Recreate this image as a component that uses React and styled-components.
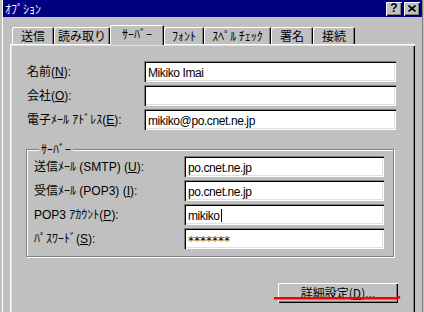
import React from "react";
import styled, { createGlobalStyle } from "styled-components";

const Global = createGlobalStyle`
  html, body { margin: 0; padding: 0; background: #c0c0c0; }
  body { font-family: "Liberation Sans", "Noto Sans CJK JP", sans-serif; font-size: 12px; color: #000; }
  * { box-sizing: border-box; }
`;

const Window = styled.div`
  position: relative;
  width: 424px;
  height: 312px;
  overflow: hidden;
  background: #c0c0c0;
  padding: 0 2px 0 3px;
  box-shadow: inset 2px 0 0 #c0c0c0, inset 3px 0 0 #fff, inset -1px 0 0 #c0c0c0, inset -2px 0 0 #808080;
`;

const TitleBar = styled.div`
  height: 17px;
  background: #000080;
  display: flex;
  align-items: center;
  padding: 0 2px 0 2px;
`;

const TitleText = styled.span`
  flex: 1;
  color: #fff;
  font-size: 12px;
  line-height: 17px;
  font-family: "Noto Sans CJK JP", sans-serif;
`;

const TitleButtons = styled.div`
  display: flex;
  gap: 2px;
`;

const TitleButton = styled.div`
  width: 16px;
  height: 14px;
  background: #c0c0c0;
  box-shadow: inset 1px 1px 0 #fff, inset -1px -1px 0 #000, inset -2px -2px 0 #808080;
  display: flex;
  align-items: center;
  justify-content: center;
  font-family: "Liberation Sans", sans-serif;
  font-weight: bold;
  font-size: 12px;
  line-height: 12px;
  color: #000;
  padding-bottom: 1px;
`;

const Body = styled.div`
  padding: 8px 7px 0 7px;
`;

const TabStrip = styled.div`
  display: flex;
  align-items: flex-end;
  height: 19px;
  padding-left: 2px;
`;

const Tab = styled.div`
  position: relative;
  z-index: ${(p) => (p.$active ? 2 : 1)};
  width: ${(p) => p.$w}px;
  height: ${(p) => (p.$active ? 20 : 17)}px;
  margin-bottom: ${(p) => (p.$active ? -1 : 0)}px;
  background: #c0c0c0;
  border-radius: 2px 2px 0 0;
  box-shadow: inset 1px 1px 0 #fff, inset -1px 0 0 #000, inset -2px 0 0 #808080;
  display: flex;
  align-items: ${(p) => (p.$active ? "flex-start" : "center")};
  justify-content: center;
  padding-top: ${(p) => (p.$active ? 2 : 1)}px;
  font-family: "Noto Sans CJK JP", sans-serif;
  font-size: 12px;
  line-height: 14px;
  white-space: nowrap;
`;

const Panel = styled.div`
  width: 405px;
  height: 300px;
  background: #c0c0c0;
  box-shadow: inset 1px 1px 0 #fff, inset 2px 2px 0 #dfdfdf, inset -1px 0 0 #000, inset -2px 0 0 #808080;
  padding: 17px 17px 0 17px;
`;

const FormGrid = styled.div`
  display: grid;
  grid-template-columns: ${(p) => p.$label}px ${(p) => p.$field}px;
  grid-auto-rows: 21px;
  row-gap: 3px;
  align-items: center;
`;

const Label = styled.label`
  font-family: "Liberation Sans", "Noto Sans CJK JP", sans-serif;
  font-size: 12px;
  line-height: 14px;
  white-space: nowrap;
  u { text-decoration: underline; text-underline-offset: 1px; }
`;

const Field = styled.div`
  height: 21px;
  background: #fff;
  box-shadow: inset 1px 1px 0 #808080, inset 2px 2px 0 #000, inset -1px -1px 0 #fff, inset -2px -2px 0 #dfdfdf;
  padding: 2px 2px 0 4px;
  display: flex;
  align-items: center;
  font-family: "Liberation Sans", sans-serif;
  font-size: 12px;
  letter-spacing: -0.4px;
  line-height: 14px;
  white-space: nowrap;
  overflow: hidden;
`;

const Secret = styled.span`
  font-family: "DejaVu Sans", sans-serif;
  font-size: 12px;
  letter-spacing: 0px;
  padding-top: 3px;
`;

const Caret = styled.span`
  display: inline-block;
  width: 1px;
  height: 13px;
  background: #000;
  margin-left: 1px;
`;

const Group = styled.fieldset`
  margin: 13px 0 0 -1px;
  width: 368px;
  padding: 1px 9px 7px 7px;
  border: 1px solid #808080;
  box-shadow: inset 1px 1px 0 #fff, 1px 1px 0 #fff;
  min-inline-size: 0;
`;

const Legend = styled.legend`
  margin-left: 5px;
  padding: 0 2px;
  background: #c0c0c0;
  font-family: "Noto Sans CJK JP", sans-serif;
  font-size: 12px;
  line-height: 12px;
`;

const ButtonRow = styled.div`
  display: flex;
  justify-content: flex-end;
  margin-top: 26px;
`;

const Button = styled.div`
  width: 120px;
  height: 20px;
  background: #c0c0c0;
  box-shadow: inset 1px 1px 0 #fff, inset -1px -1px 0 #000, inset -2px -2px 0 #808080;
  display: flex;
  align-items: center;
  justify-content: center;
  font-family: "Noto Sans CJK JP", sans-serif;
  font-size: 12px;
  line-height: 14px;
  u { text-decoration: underline; text-underline-offset: 1px; }
`;

const RedMark = styled.svg`
  position: absolute;
  left: 274px;
  top: 295px;
  width: 128px;
  height: 6px;
  pointer-events: none;
`;

const tabs = [
  { t: "送信", w: 42 },
  { t: "読み取り", w: 56 },
  { t: "ｻｰﾊﾞｰ", w: 54, active: true },
  { t: "ﾌｫﾝﾄ", w: 40 },
  { t: "ｽﾍﾟﾙ ﾁｪｯｸ", w: 67 },
  { t: "署名", w: 42 },
  { t: "接続", w: 42 },
];

export default function App() {
  return (
    <>
      <Global />
      <Window>
        <TitleBar>
          <TitleText>ｵﾌﾟｼｮﾝ</TitleText>
          <TitleButtons>
            <TitleButton>?</TitleButton>
            <TitleButton>
              <svg width="8" height="7" viewBox="0 0 8 7">
                <path d="M0.5 0.5 L7.5 6.5 M7.5 0.5 L0.5 6.5" stroke="#000" strokeWidth="1.6" />
              </svg>
            </TitleButton>
          </TitleButtons>
        </TitleBar>
        <Body>
          <TabStrip>
            {tabs.map((tb) => (
              <Tab key={tb.t} $w={tb.w} $active={tb.active}>
                {tb.t}
              </Tab>
            ))}
          </TabStrip>
          <Panel>
            <FormGrid $label={117} $field={252}>
              <Label>名前(<u>N</u>):</Label>
              <Field>Mikiko Imai</Field>
              <Label>会社(<u>O</u>):</Label>
              <Field />
              <Label>電子ﾒｰﾙ ｱﾄﾞﾚｽ(<u>E</u>):</Label>
              <Field>mikiko@po.cnet.ne.jp</Field>
            </FormGrid>
            <Group>
              <Legend>ｻｰﾊﾞｰ</Legend>
              <FormGrid $label={150} $field={200}>
                <Label>送信ﾒｰﾙ (SMTP) (<u>U</u>):</Label>
                <Field>po.cnet.ne.jp</Field>
                <Label>受信ﾒｰﾙ (POP3) (<u>I</u>):</Label>
                <Field>po.cnet.ne.jp</Field>
                <Label>POP3 ｱｶｳﾝﾄ(<u>P</u>):</Label>
                <Field>
                  mikiko<Caret />
                </Field>
                <Label>ﾊﾟｽﾜｰﾄﾞ(<u>S</u>):</Label>
                <Field>
                  <Secret>*******</Secret>
                </Field>
              </FormGrid>
            </Group>
            <ButtonRow>
              <Button>
                詳細設定(<u>D</u>)...
              </Button>
            </ButtonRow>
          </Panel>
        </Body>
        <RedMark viewBox="0 0 128 6">
          <path d="M0 3.2 H123 L126 1.8" stroke="#ff0000" strokeWidth="2.6" fill="none" />
        </RedMark>
      </Window>
    </>
  );
}
